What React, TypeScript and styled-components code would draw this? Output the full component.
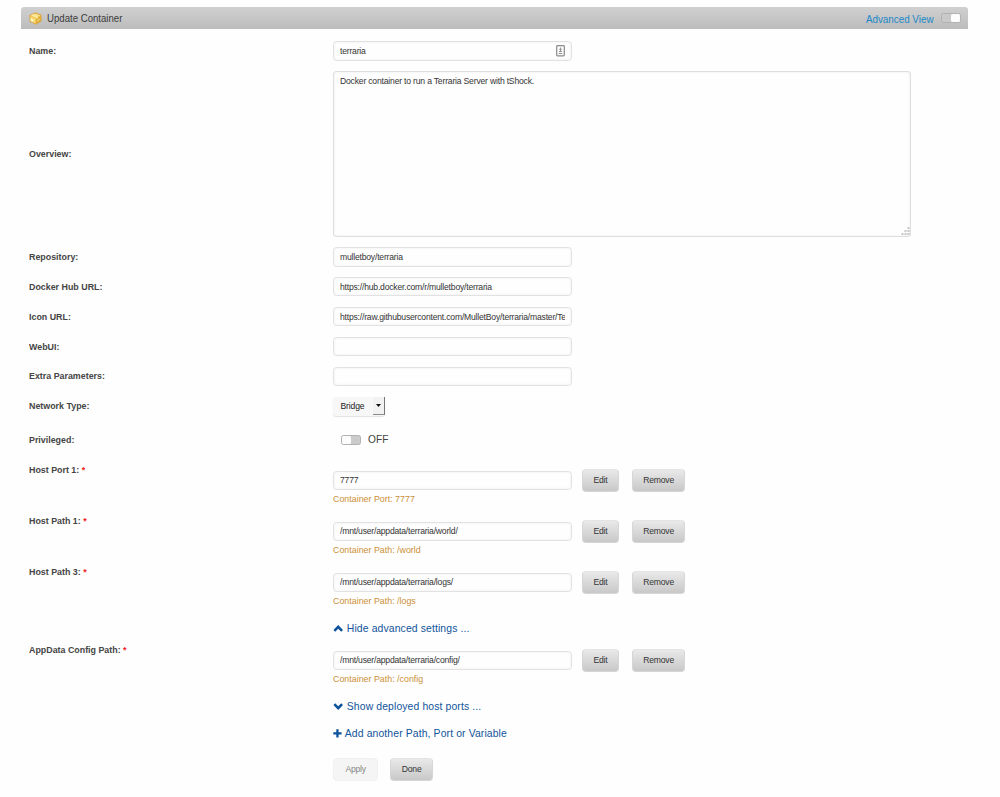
import React from 'react';
import styled, { createGlobalStyle } from 'styled-components';

const GlobalStyle = createGlobalStyle`
  body {
    margin: 0;
    background: #fefefe;
    color: #404040;
    font-family: "Liberation Sans", Arial, sans-serif;
  }
  *, *::before, *::after { box-sizing: border-box; }
`;

const Page = styled.main`
  width: 1000px;
  height: 797px;
  padding: 7px 32px 0 21.3px;
  overflow: hidden;
`;

const TitleBar = styled.header`
  display: flex;
  align-items: center;
  height: 22px;
  padding: 0 7px 0 7.5px;
  border-radius: 3px 3px 0 0;
  background: linear-gradient(#d0d0d0, #bcbcbc);
`;

const Title = styled.h1`
  flex: 1;
  margin: -1px 0 0 5px;
  font-size: 10.7px;
  font-weight: 400;
  transform: scaleX(0.9);
  transform-origin: left center;
  color: #3c3c3c;
`;

const AdvancedLabel = styled.span`
  margin: 1px 8px 0 0;
  font-size: 10.7px;
  transform: scaleX(0.92);
  transform-origin: right center;
  color: #2088c9;
`;

const Switch = styled.span<{ $on?: boolean }>`
  display: flex;
  justify-content: ${p => (p.$on ? 'flex-end' : 'flex-start')};
  width: 20px;
  height: 10px;
  border: 1px solid #b2b2b2;
  border-radius: 2.5px;
  background: ${p => (p.$on ? '#c9c9c9' : '#cbcbcb')};
  &::after {
    content: '';
    width: 9px;
    border-radius: 1.5px;
    background: #fcfcfc;
  }
`;

const Form = styled.form`
  padding: 7px 0 0 8px;
`;

const Row = styled.div<{ $h?: number }>`
  display: grid;
  grid-template-columns: 304px 1fr;
  align-items: center;
  height: ${p => p.$h ?? 29.9}px;
`;

const ConfigRow = styled(Row)`
  align-items: start;
  height: 51px;
`;

const Label = styled.label`
  font-size: 9.8px;
  font-weight: 700;
  line-height: 22px;
  transform: scaleX(0.905);
  transform-origin: left center;
  color: #454545;
`;

const Required = styled.span`
  color: #ee2222;
`;

const Field = styled.div`
  position: relative;
  width: 238.5px;
  height: 19.5px;
`;

const Input = styled.input`
  display: block;
  width: 100%;
  height: 100%;
  padding: 0 6px 0 5.7px;
  border: 1px solid #e2e2e2;
  border-radius: 3.5px;
  outline: none;
  background: #fefefe;
  box-shadow: inset 0 0 3px #eeeeee;
  font: 8.6px "Liberation Sans", Arial, sans-serif;
  letter-spacing: -0.2px;
  color: #343434;
`;

const FieldBadge = styled.svg`
  position: absolute;
  top: 4px;
  right: 7px;
`;

const OverviewBox = styled.div`
  position: relative;
  width: 577.5px;
  height: 166px;
`;

const TextArea = styled.textarea`
  display: block;
  width: 100%;
  height: 100%;
  padding: 5px 6px 5px 5.7px;
  border: 1px solid #dedede;
  border-radius: 3px;
  outline: none;
  resize: none;
  background: #fefefe;
  box-shadow: inset 0 0 3px #eeeeee;
  font: 8.6px/9px "Liberation Sans", Arial, sans-serif;
  letter-spacing: -0.19px;
  color: #343434;
`;

const Grip = styled.svg`
  position: absolute;
  right: 1px;
  bottom: 1px;
`;

const Select = styled.div`
  display: flex;
  align-items: center;
  justify-content: space-between;
  width: 51.3px;
  height: 19px;
  padding-left: 7.2px;
  border-radius: 3px;
  background: #f7f7f7;
  box-shadow: 0 1px 1px #e2e2e2;
  font-size: 8.6px;
  letter-spacing: -0.15px;
  color: #222222;
`;

const SelectArrow = styled.span`
  display: flex;
  align-items: center;
  justify-content: center;
  width: 12px;
  height: 18px;
  border-right: 1.5px solid #777777;
  border-bottom: 1.5px solid #8a8a8a;
  background: #f2f2f2;
`;

const SwitchLine = styled.div`
  display: flex;
  align-items: center;
  gap: 7px;
  padding-left: 7.7px;
  font-size: 10.2px;
  color: #444444;
`;

const ConfigCell = styled.div`
  padding-top: 10px;
`;

const ControlLine = styled.div`
  display: flex;
  align-items: center;
  height: 23px;
`;

const Button = styled.button<{ $w: number; $gap?: number }>`
  width: ${p => p.$w}px;
  height: 23px;
  margin: 0 0 0 ${p => p.$gap ?? 0}px;
  padding: 0;
  border: 1px solid #d6d6d6;
  border-top-color: #e4e4e4;
  border-radius: 4px;
  background: linear-gradient(#e9e9e9, #c8c8c8);
  font: 8.6px "Liberation Sans", Arial, sans-serif;
  letter-spacing: -0.2px;
  color: #343434;
  &:disabled {
    border-color: #f1f1f1;
    background: #f5f5f5;
    color: #868686;
  }
`;

const Hint = styled.div`
  font-size: 9.8px;
  line-height: 14px;
  transform: scaleX(0.905);
  transform-origin: left center;
  color: #cc9038;
`;

const LinkRow = styled.div<{ $h: number; $top?: number }>`
  display: flex;
  align-items: center;
  height: ${p => p.$h}px;
  padding: ${p => p.$top ?? 0}px 0 0 304px;
`;

const Link = styled.a<{ $gap: number }>`
  display: flex;
  align-items: center;
  gap: ${p => p.$gap}px;
  font-size: 10.4px;
  letter-spacing: 0.12px;
  line-height: 13px;
  color: #10549b;
`;

const Actions = styled.div`
  display: flex;
  padding: 14px 0 0 304px;
`;

const BoxIcon = () => (
  <svg width="13" height="13" viewBox="0 0 13 13">
    <path d="M.8 3.4 6.2.8l5.9 2.3.1 6L6.9 12.2 1 9.4z" fill="#e9b843" stroke="#d29a38" strokeWidth=".7" />
    <path d="M1.5 3.6 6.2 1.4l5.2 2-4.7 2.5z" fill="#fae08a" />
    <path d="m1.3 4.2 5.2 2.3v4.9L1.5 9z" fill="#f7dc75" />
    <path d="M7.2 6.5 11.6 4v4.8l-4.4 2.6z" fill="#dfad38" />
    <path d="m3.7 2.5 5.2 2.2v1.6L7.5 7V5.3L2.5 3.1z" fill="#fcebaa" />
    <path d="m1.7 6.5 2.6 1.2v2L1.7 8.5z" fill="#fffbe0" />
    <path d="m8.2 8.6 2.6-1.5" stroke="#f9e48a" strokeWidth="1" />
  </svg>
);

const Chevron = ({ up }: { up?: boolean }) => (
  <svg width="10" height="7" viewBox="0 0 10 7">
    <path
      d={up ? 'M5.2 .1 10 5 8.2 6.8 5.2 3.8 2.2 6.8.4 5z' : 'M5.2 6.9 10 2 8.2.2 5.2 3.2 2.2.2.4 2z'}
      fill="#0c529c"
    />
  </svg>
);

const Plus = () => (
  <svg width="9" height="9" viewBox="0 0 9 9">
    <path d="M3.3.3h2.3v2.9h3v2.3h-3v2.9H3.3V5.5h-3V3.2h3z" fill="#0c529c" />
  </svg>
);

const TextField = ({ value, children }: { value: string; children?: React.ReactNode }) => (
  <Field>
    <Input defaultValue={value} />
    {children}
  </Field>
);

const ConfigItem = ({ label, value, hint }: { label: string; value: string; hint: string }) => (
  <ConfigRow>
    <Label>
      {label} <Required>*</Required>
    </Label>
    <ConfigCell>
      <ControlLine>
        <TextField value={value} />
        <Button type="button" $w={37.3} $gap={10}>Edit</Button>
        <Button type="button" $w={53.7} $gap={12.7}>Remove</Button>
      </ControlLine>
      <Hint>{hint}</Hint>
    </ConfigCell>
  </ConfigRow>
);

const basicFields = [
  { label: 'Repository:', value: 'mulletboy/terraria' },
  { label: 'Docker Hub URL:', value: 'https://hub.docker.com/r/mulletboy/terraria' },
  { label: 'Icon URL:', value: 'https://raw.githubusercontent.com/MulletBoy/terraria/master/Terraria.png' },
  { label: 'WebUI:', value: '' },
  { label: 'Extra Parameters:', value: '' },
];

const configItems = [
  { label: 'Host Port 1:', value: '7777', hint: 'Container Port: 7777' },
  { label: 'Host Path 1:', value: '/mnt/user/appdata/terraria/world/', hint: 'Container Path: /world' },
  { label: 'Host Path 3:', value: '/mnt/user/appdata/terraria/logs/', hint: 'Container Path: /logs' },
];

export default function App() {
  return (
    <Page>
      <GlobalStyle />
      <TitleBar>
        <BoxIcon />
        <Title>Update Container</Title>
        <AdvancedLabel>Advanced View</AdvancedLabel>
        <Switch $on />
      </TitleBar>
      <Form>
        <Row>
          <Label>Name:</Label>
          <TextField value="terraria">
            <FieldBadge width="9" height="12" viewBox="0 0 9 12">
              <rect x=".7" y=".7" width="7.6" height="10.2" rx=".8" fill="#fafafa" stroke="#8c8c8c" strokeWidth="1.2" />
              <path d="M4.5 2.5v4M3.3 4.3h2.4M3 6.5h3M2.7 8.5h3.6" stroke="#8c8c8c" strokeWidth=".9" />
            </FieldBadge>
          </TextField>
        </Row>
        <Row $h={176}>
          <Label>Overview:</Label>
          <OverviewBox>
            <TextArea defaultValue="Docker container to run a Terraria Server with tShock." />
            <Grip width="9" height="9" viewBox="0 0 9 9">
              <path d="M6.5 0h2v2h-2zM3.5 3h2v2h-2zM6.5 3h2v2h-2zM.5 6h2v2h-2zM3.5 6h2v2h-2zM6.5 6h2v2h-2z" fill="#c6c6c6" />
            </Grip>
          </OverviewBox>
        </Row>
        {basicFields.map(f => (
          <Row key={f.label}>
            <Label>{f.label}</Label>
            <TextField value={f.value} />
          </Row>
        ))}
        <Row $h={29.6}>
          <Label>Network Type:</Label>
          <Select>
            Bridge
            <SelectArrow>
              <svg width="5" height="3" viewBox="0 0 5 3">
                <path d="M0 0h5L2.5 3z" fill="#111" />
              </svg>
            </SelectArrow>
          </Select>
        </Row>
        <Row $h={38}>
          <Label>Privileged:</Label>
          <SwitchLine>
            <Switch />
            OFF
          </SwitchLine>
        </Row>
        {configItems.map(c => (
          <ConfigItem key={c.label} {...c} />
        ))}
        <LinkRow $h={27} $top={6}>
          <Link $gap={3.5}>
            <Chevron up />
            Hide advanced settings ...
          </Link>
        </LinkRow>
        <ConfigItem
          label="AppData Config Path:"
          value="/mnt/user/appdata/terraria/config/"
          hint="Container Path: /config"
        />
        <LinkRow $h={33}>
          <Link $gap={3.5}>
            <Chevron />
            Show deployed host ports ...
          </Link>
        </LinkRow>
        <LinkRow $h={21}>
          <Link $gap={2.5}>
            <Plus />
            Add another Path, Port or Variable
          </Link>
        </LinkRow>
        <Actions>
          <Button type="button" $w={44.7} disabled>Apply</Button>
          <Button type="button" $w={43.3} $gap={12}>Done</Button>
        </Actions>
      </Form>
    </Page>
  );
}
